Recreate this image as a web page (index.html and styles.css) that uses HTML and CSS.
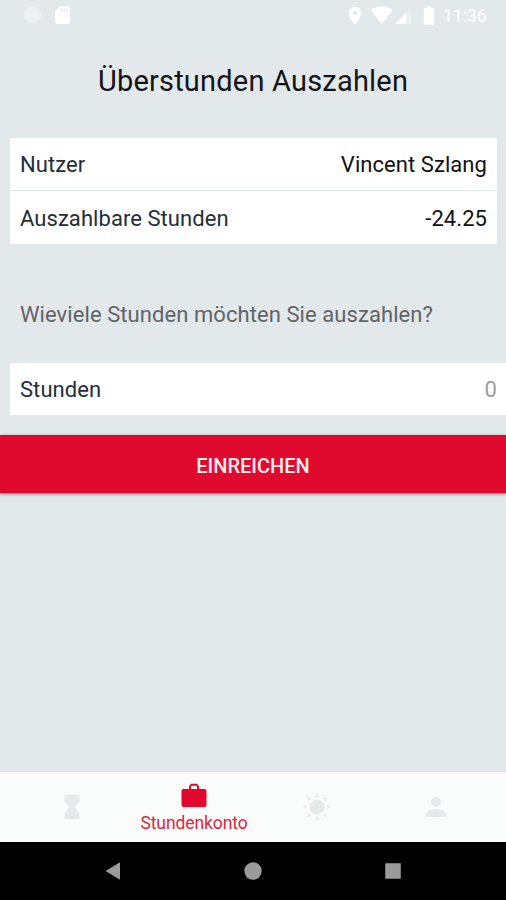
FILE: index.html
```html
<!DOCTYPE html>
<html lang="de">
<head>
<meta charset="utf-8">
<title>Überstunden Auszahlen</title>
<link rel="stylesheet" href="styles.css">
</head>
<body>
<div class="app">
  <header class="status">
    <svg class="status-left" width="60" height="32" viewBox="16 0 60 32" fill="#fff">
      <circle cx="32.5" cy="15" r="8.5" opacity=".35"/>
      <path d="M39.5 10a8.500 8.500 0 0 1-11.500 12.200a8.500 8.500 0 0 0 11.500-12.200z" opacity=".85"/>
      <path fill-rule="evenodd" d="M60.500 6H68a1.800 1.800 0 0 1 1.800 1.800V22.200a1.800 1.800 0 0 1-1.800 1.800H57a1.800 1.800 0 0 1-1.800-1.800V11.500zM60.200 8.500v3h1.600v-3zM63.200 8.500v3h1.600v-3zM66.200 8.500v3h1.600v-3z"/>
    </svg>
    <svg class="status-right" width="92" height="32" viewBox="346 0 92 32" fill="#fff">
      <path fill-rule="evenodd" d="M355 6.700a6.200 6.200 0 0 0-6.200 6.200C348.800 17.500 355 24.300 355 24.300s6.200-6.800 6.200-11.400A6.200 6.200 0 0 0 355 6.700zm0 4a2.200 2.200 0 1 1 0 4.400 2.200 2.200 0 0 1 0-4.400z"/>
      <path d="M371 10.400a17 17 0 0 1 21.500 0L381.700 24z"/>
      <path d="M411.500 7.500V24H395z" opacity=".3"/>
      <path d="M406 13V24H395z"/>
      <path d="M426.500 8V6h4.500v2h1.700q1.300 0 1.300 1.300V23.500q0 1.300-1.300 1.300h-7.600q-1.300 0-1.300-1.300V9.300q0-1.300 1.300-1.300z"/>
    </svg>
    <span class="clock">11:36</span>
  </header>
  <main class="content">
    <h1 class="title">Überstunden Auszahlen</h1>
    <section class="card">
      <div class="row"><span class="label">Nutzer</span><span class="value">Vincent Szlang</span></div>
      <div class="row"><span class="label">Auszahlbare Stunden</span><span class="value">-24.25</span></div>
    </section>
    <p class="question">Wieviele Stunden möchten Sie auszahlen?</p>
    <label class="field"><span class="label">Stunden</span><span class="placeholder">0</span></label>
    <button class="submit">EINREICHEN</button>
  </main>
  <nav class="tabs">
    <a class="tab"><svg width="16" height="26" viewBox="0 0 16 26" fill="#e5e9ea"><path d="M.5 1h15v5.500Q15 9.500 10 13q5 3.500 5.500 6.500V25H.5v-5.500Q1 16.500 6 13 1 9.500.5 6.500z"/></svg></a>
    <a class="tab active">
      <svg width="26" height="25" viewBox="0 0 26 25" fill="#e0082c"><path fill-rule="evenodd" d="M8 6V3.200L10 .7h6l2 2.500V6h5.500a2 2 0 0 1 2 2v14a2 2 0 0 1-2 2h-21a2 2 0 0 1-2-2V8a2 2 0 0 1 2-2zm2 0h6V3.500L15.200 2.700h-4.400L10 3.500z"/></svg>
      <span>Stundenkonto</span>
    </a>
    <a class="tab"><svg width="30" height="30" viewBox="-15 -15 30 30" fill="#e5e9ea"><circle r="7.500"/><g id="rays"><path id="ray" d="M0-14L2-10.300H-2z"/><use href="#ray" transform="rotate(45)"/><use href="#ray" transform="rotate(90)"/><use href="#ray" transform="rotate(135)"/></g><use href="#rays" transform="rotate(180)"/></svg></a>
    <a class="tab"><svg width="22" height="22" viewBox="0 0 22 22" fill="#e5e9ea"><circle cx="11" cy="6" r="5"/><path d="M.7 21v-2.500C.7 15 7.500 13 11 13s10.300 2 10.300 5.500V21z"/></svg></a>
  </nav>
  <footer class="system">
    <svg width="16" height="20" viewBox="0 0 16 20" fill="#9b9b9b"><path d="M.5 10L15 1.300V18.700z"/></svg>
    <svg width="20" height="20" viewBox="0 0 20 20" fill="#9b9b9b"><circle cx="10" cy="10" r="8.700"/></svg>
    <svg width="16" height="20" viewBox="0 0 16 20" fill="#9b9b9b"><rect x=".2" y="2.200" width="15.600" height="15.600" rx=".5"/></svg>
  </footer>
</div>
</body>
</html>
```
FILE: styles.css
```css
* { box-sizing: border-box; }
body { margin: 0; font-family: Roboto, "Liberation Sans", sans-serif; }
.app {
  display: flex;
  flex-direction: column;
  width: 506px;
  height: 900px;
  overflow: hidden;
  background: #e3e8eb;
}
.status {
  display: flex;
  align-items: center;
  flex: none;
  height: 32px;
  padding: 0 18px 0 16px;
  color: #fff;
}
.status-right { margin-left: auto; }
.clock { width: 50px; padding-left: 5px; font-size: 17.500px; letter-spacing: 0; white-space: nowrap; }
.content { flex: 1; }
.title {
  margin: 0;
  height: 106px;
  padding-top: 31px;
  text-align: center;
  font-size: 29px;
  line-height: 36px;
  font-weight: 400;
  letter-spacing: .2px;
  color: #111516;
}
.card { display: grid; gap: 1px; margin: 0 9px 0 10px; }
.row, .field {
  display: flex;
  align-items: center;
  justify-content: space-between;
  height: 53px;
  padding: 0 10px;
  background: #fff;
  font-size: 22px;
  letter-spacing: .06px;
}
.row:first-child { height: 52px; }
.row + .row { padding-top: 1px; }
.label { color: #222e38; }
.value { color: #111; }
.question {
  margin: 0;
  height: 119px;
  padding: 58px 20px 0;
  font-size: 22px;
  line-height: 26px;
  letter-spacing: .07px;
  color: #606466;
}
.field { height: 52px; margin: 0 0 20px 10px; padding-right: 9px; }
.placeholder { color: #9b9d9e; }
.submit {
  display: block;
  width: 100%;
  height: 58px;
  padding: 3px 0 0;
  border: 0;
  background: #df0a2e;
  box-shadow: 0 1px 3px rgba(0, 0, 0, .5);
  color: #fff0f0;
  font: 500 20px Roboto, "Liberation Sans", sans-serif;
}
.tabs {
  display: grid;
  grid-template-columns: 123px 122px 124px 113px;
  flex: none;
  height: 71px;
  padding-left: 10px;
  border-top: 1px solid #dcdfe0;
  background: #fafbfb;
}
.tab {
  display: flex;
  flex-direction: column;
  align-items: center;
  justify-content: center;
}
.active { padding-top: 3px; color: #dc2740; font-size: 17.500px; line-height: 22px; letter-spacing: -.1px; gap: 4px; }
.system {
  display: flex;
  align-items: center;
  justify-content: space-between;
  flex: none;
  height: 58px;
  padding: 0 105px;
  background: #000;
}
```
